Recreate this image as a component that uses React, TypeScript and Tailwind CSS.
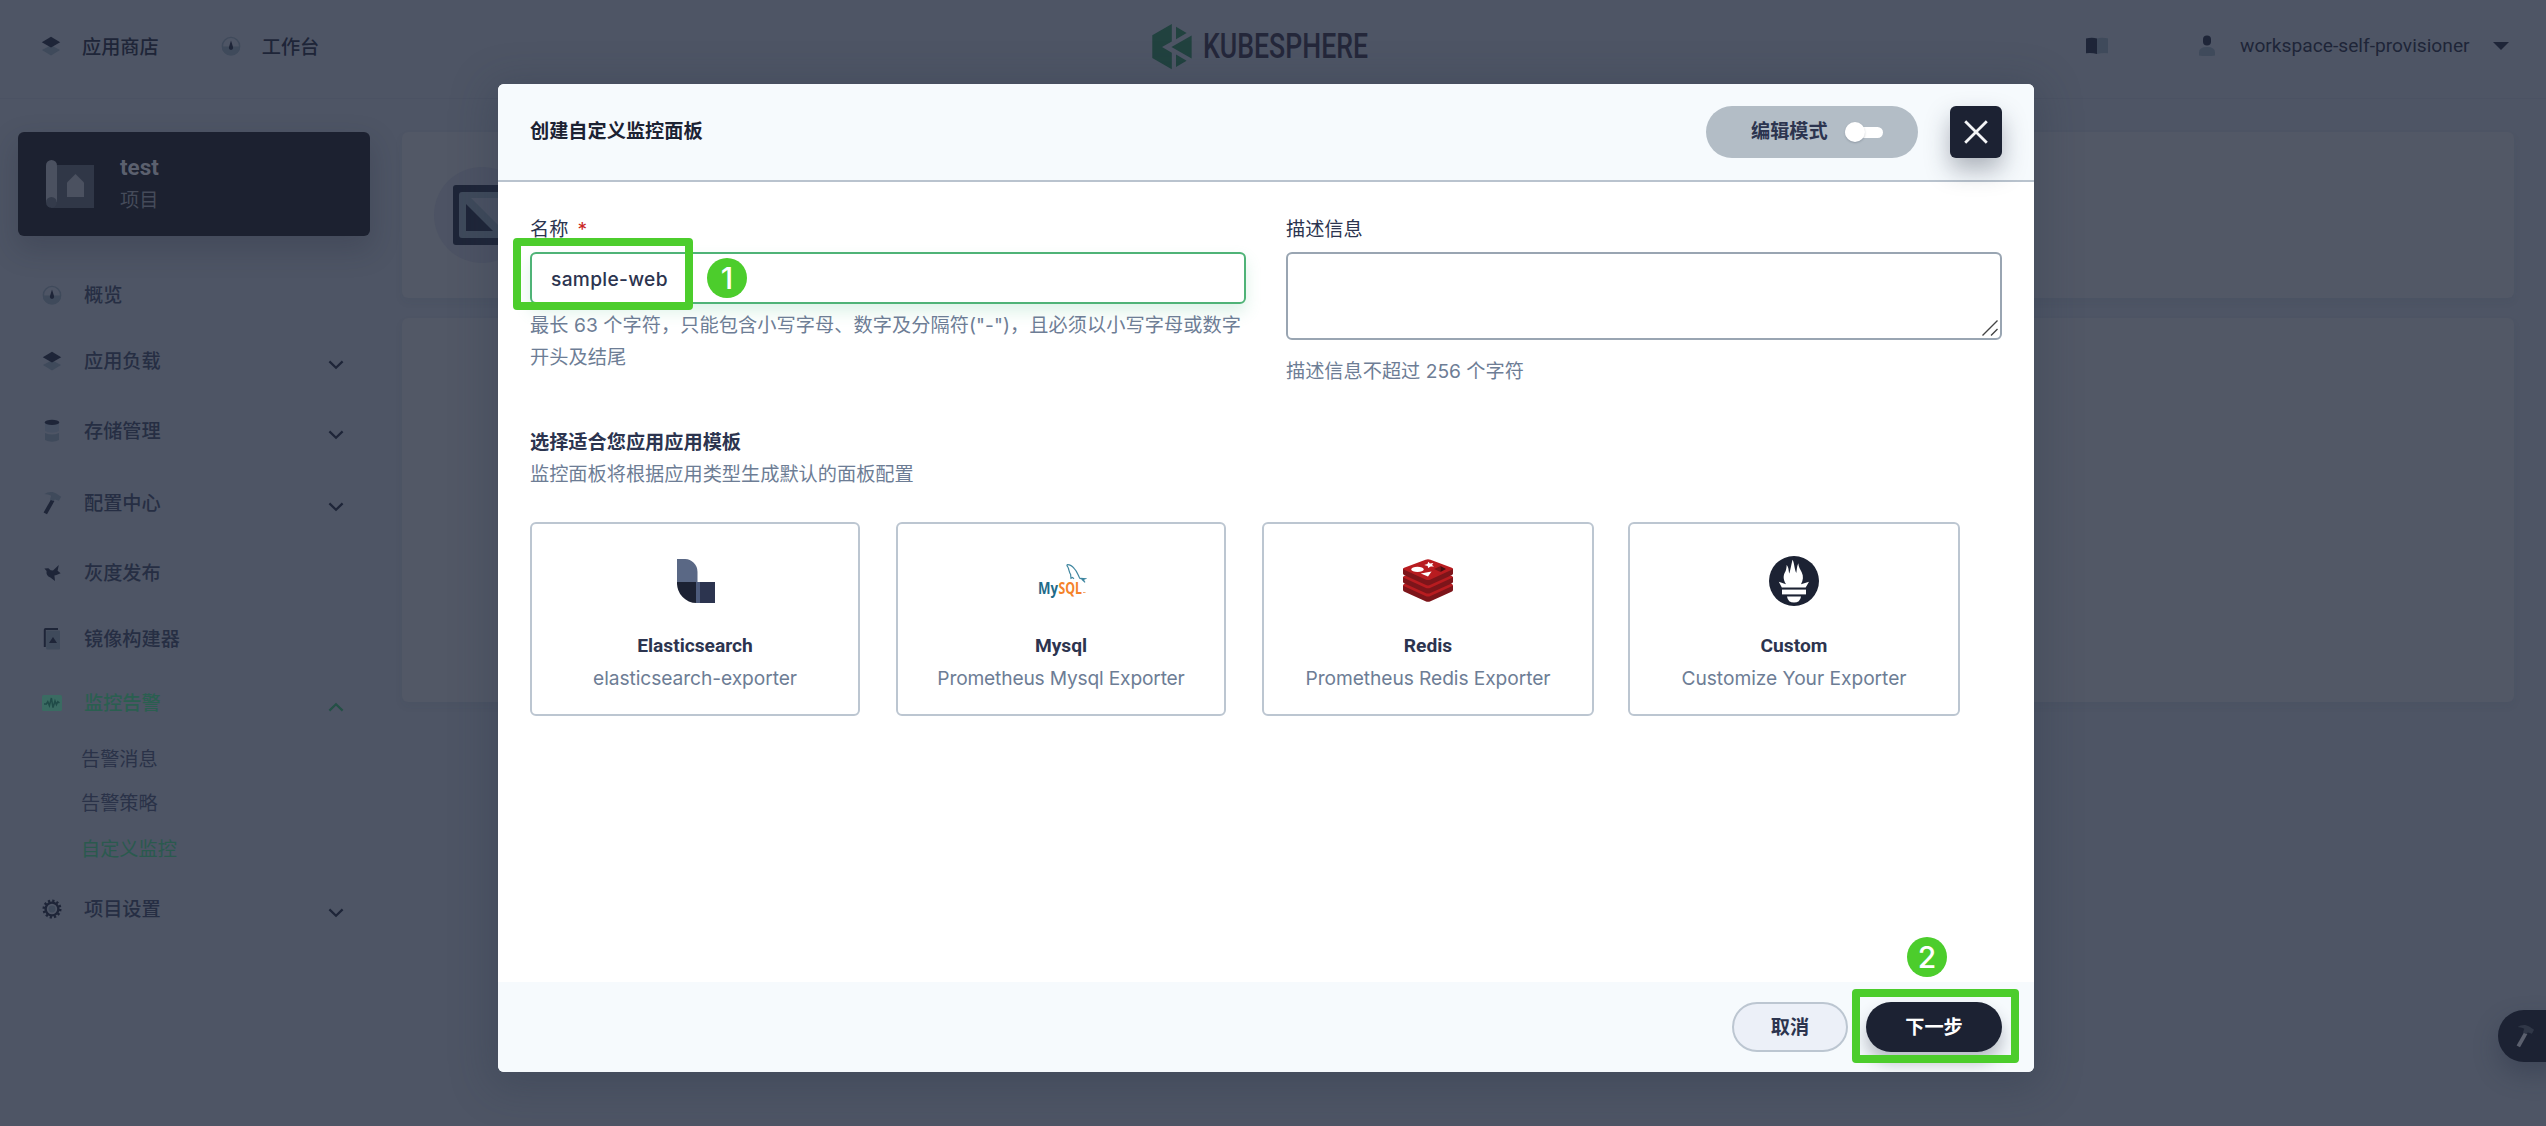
import type { ReactNode } from 'react';

type IconProps = { className?: string };

const LayersIcon = ({ className = '' }: IconProps) => (
  <svg className={className} width="20" height="20" viewBox="0 0 20 20">
    <path d="M10 9.2 19 14 10 19.4 1 14z" fill="#3f4a5b" />
    <path d="M10 .8 19.2 6.2 10 11.6 .8 6.2z" fill="#1e2538" />
  </svg>
);

const DashboardIcon = ({ className = '' }: IconProps) => (
  <svg className={className} width="20" height="20" viewBox="0 0 20 20">
    <circle cx="10" cy="10" r="8.6" fill="none" stroke="#3f4a5b" strokeWidth="1.4" />
    <path d="M.8 10.4h18.4a9.2 9.2 0 0 1-18.4 0z" fill="#3f4a5b" />
    <path d="M10 4.6 12 11a2.1 2.1 0 1 1-4 0z" fill="#1e2538" />
  </svg>
);

const StorageIcon = () => (
  <svg width="20" height="24" viewBox="0 0 20 24">
    <path d="M3 4h14v8q-7 3-14 0z" fill="#465062" />
    <path d="M3 14q7 3 14 0v7q-7 3.6-14 0z" fill="#3f4a5b" />
    <ellipse cx="10" cy="3.4" rx="7.2" ry="2.6" fill="#1e2538" />
  </svg>
);

const HammerIcon = ({ handle, head }: { handle: string; head: string }) => (
  <svg width="20" height="24" viewBox="0 0 20 24">
    <path d="M9 8.5l3.4 1.6L5 23.2 1.6 21.4z" fill={handle} />
    <path d="M2.6 2.9C6 .4 11.3.2 14.2 2.6l4.9 3.2-2.2 4-3.8-1.4-2.6 1.4L8 8.4l1.2-3.6C7 3.2 4.6 3.4 2.6 2.9z" fill={head} />
  </svg>
);

const BirdIcon = () => (
  <svg width="20" height="20" viewBox="0 0 20 20">
    <path d="M2.4 5.6 6.4 5.2 8.6 7.2 11 7.4 16.8 2 15.6 7.8 18.6 10.2 14.4 12 12.4 12.6 13 18 8.4 14.6C5.4 13.6 4 11 4.6 8z" fill="#1e2538" />
  </svg>
);

const ImageBuilderIcon = () => (
  <svg width="20" height="24" viewBox="0 0 20 24">
    <path d="M2.8 20V2.8q0-.8.8-.8H16" fill="none" stroke="#1e2538" strokeWidth="2" />
    <rect x="4.2" y="3.4" width="13.8" height="19.2" rx="1" fill="#3f4a5b" />
    <path d="M11 10l4 6H7z" fill="#1e2538" />
  </svg>
);

const MonitorIcon = () => (
  <svg width="20" height="16" viewBox="0 0 20 16">
    <rect width="20" height="16" rx="1.5" fill="#3a6b62" />
    <path d="M2 9h2.4l1.4-2.4 1.6 4L9.4 3 11 12.6 13 6l1.4 3.6 1.4-3L17.4 8" fill="none" stroke="#204b48" strokeWidth="1.5" />
  </svg>
);

const GearIcon = () => (
  <svg width="20" height="20" viewBox="0 0 20 20">
    <circle cx="10" cy="10" r="8.2" fill="none" stroke="#1e2538" strokeWidth="2.6" strokeDasharray="2.2 2.093" />
    <circle cx="10" cy="10" r="6.4" fill="none" stroke="#1e2538" strokeWidth="2.4" />
    <circle cx="10" cy="10" r="3.4" fill="#3f4a5b" />
  </svg>
);

const Chevron = ({ up }: { up?: boolean }) => (
  <svg width="16" height="10" viewBox="0 0 16 10" fill="none" strokeWidth="2.2">
    {up ? <path d="M1.4 8.6 8 2.2l6.6 6.4" stroke="#245046" /> : <path d="M1.4 1.4 8 7.8l6.6-6.4" stroke="#1e2538" />}
  </svg>
);

const ProjectIcon = () => (
  <svg width="48" height="48" viewBox="0 0 48 48">
    <path d="M11 5h37v43H5V38h6z" fill="#303747" />
    <path d="M0 5.5a5.5 5.5 0 0 1 11 0V42H0z" fill="#4b5160" />
    <circle cx="5.4" cy="42.4" r="5.4" fill="#343b4b" />
    <path d="M29.500 14l8.500 8.500V37H21V22.500z" fill="#4b5160" />
  </svg>
);

const Logo = () => (
  <svg className="overflow-visible" width="240" height="56" viewBox="0 0 240 56">
    <g fill="#21423f">
      <path d="M19.800 2v17.400L10 25l9.800 5.800V47.200L.3 36V13.200z" />
      <path d="M24 4.800 34.600 11 24 17.200z" />
      <path d="M39.600 13.600v22.800L19.500 25z" />
      <path d="M24 32.600 34.600 38.800 24 45z" />
    </g>
    <text x="51" y="36.300" fontSize="34.200" textLength="165" lengthAdjust="spacingAndGlyphs" fill="#24273a" className="font-['Roboto',sans-serif] font-medium">
      KUBESPHERE
    </text>
  </svg>
);

const ElasticIcon = () => (
  <svg className="ml-[2px]" width="38" height="44" viewBox="0 0 38 44">
    <path d="M0 0h7a13 13 0 0 1 13.500 13.500V23H0z" fill="#5a6885" />
    <path d="M0 23h19.500v21A19.500 20 0 0 1 0 23z" fill="#1c2233" />
    <path d="M19 23h19v21H19z" fill="#2c344f" />
    <path d="M19 23h4v21h-4z" fill="#4d5b7b" />
  </svg>
);

const MysqlIcon = () => (
  <svg className="ml-[2px] mt-[2px]" width="50" height="36" viewBox="0 0 50 36">
    <text x="1" y="29.500" fontSize="16" textLength="20" lengthAdjust="spacingAndGlyphs" fill="#1f6b8a" className="font-['Open_Sans',sans-serif] font-bold">My</text>
    <text x="21.500" y="29.500" fontSize="16" textLength="23.500" lengthAdjust="spacingAndGlyphs" fill="#f5822a" className="font-['Open_Sans',sans-serif] font-bold">SQL</text>
    <path d="M46 28.500h2.500" stroke="#f5a76a" strokeWidth="1" />
    <path d="M47.500 17.400c-1.500-3-4-2.200-5-3.600-1.400-2.600-2.400-6.600-5.400-9.400C35.400 2.200 33 .6 30.600.6c-1.600.4.200 2 .8 3.600.8 2.600 1 4.600 2.200 6.200l.4 3.800 1.400-.8 1.600 1.400M43.500 14.400l4.600.4-2.600 1.200 2.600 2.400" fill="none" stroke="#3f86a0" strokeWidth="1.200" />
  </svg>
);

const redisLayers = [16.4, 8.2, 0];

const RedisIcon = () => (
  <svg width="50" height="44" viewBox="0 0 50 44">
    {redisLayers.map((y) => (
      <g key={y} transform={`translate(0 ${y})`}>
        <path d="M0 9.800h50v4.800q0 1-1.500 1.700L27.500 25.800q-2.500 1.200-5 0L1.500 16.300Q0 15.600 0 14.600z" fill="#7d151a" />
        <path d="M1.200 8.700 22.500.700q2.500-1 5 0l21.300 8q2.200 1 0 2.100L27.500 20.500q-2.500 1.200-5 0L1.200 10.800q-2.200-1.100 0-2.100z" fill="#b81c20" />
      </g>
    ))}
    <ellipse cx="14.500" cy="10.400" rx="6.200" ry="2.700" fill="#fff" />
    <path d="M25.400 2.800l1.500 1.700 3.400-.4-1.300 1.900 2 1.600-3.300-.2-2.600 1.700-.4-2.200-3.500-.9 3.200-.9z" fill="#fff" />
    <path d="M17.800 14.400 28.600 12.600 25 17.600z" fill="#fff" />
    <path d="M31 10l6.500-3v6z" fill="#7d151a" />
    <path d="M37.500 7l5.500 3-5.500 3z" fill="#450e11" />
  </svg>
);

const PrometheusIcon = () => (
  <svg width="50" height="50" viewBox="0 0 50 50">
    <circle cx="25" cy="25" r="25" fill="#1c2233" />
    <g fill="#fff">
      <path d="M12.800 31.500 9.800 25.800 17 28.200C13.500 23 14.500 18.500 16.400 15.600c.7-1.800 1.300-4 1.200-6.600 2.600 3 1.800 6 2.700 8.400 1-3 1.900-8 3.200-13.600 2 3.200 1.600 8.400 3.800 13.200.6-3.200.4-6.600 2-9.800.2 3.600 1.800 6 3.400 9 2 4 1.500 8.200-.7 12l8-2.400-3.300 5.700z" />
      <path d="M13 33.600h24v4.800H13z" />
      <path d="M18 40.400h14q-1 6.200-7 6.200t-7-6.200z" />
    </g>
  </svg>
);

type MenuEntry = {
  label: string;
  icon: ReactNode;
  gap: string;
  expand?: 'down' | 'up';
  active?: boolean;
};

const menu: MenuEntry[] = [
  { label: '概览', icon: <DashboardIcon />, gap: 'mt-[39px]' },
  { label: '应用负载', icon: <LayersIcon />, gap: 'mt-[26px]', expand: 'down' },
  { label: '存储管理', icon: <StorageIcon />, gap: 'mt-[30px]', expand: 'down' },
  { label: '配置中心', icon: <HammerIcon handle="#1e2538" head="#3f4a5b" />, gap: 'mt-[32px]', expand: 'down' },
  { label: '灰度发布', icon: <BirdIcon />, gap: 'mt-[30px]' },
  { label: '镜像构建器', icon: <ImageBuilderIcon />, gap: 'mt-[26px]' },
  { label: '监控告警', icon: <MonitorIcon />, gap: 'mt-[24px]', expand: 'up', active: true },
];

const submenu = [
  { label: '告警消息', style: 'mt-[16px] text-[#2a3248]' },
  { label: '告警策略', style: 'mt-[4px] text-[#2a3248]' },
  { label: '自定义监控', style: 'mt-[6px] text-[#2a5a4e]' },
];

const templates = [
  { title: 'Elasticsearch', text: 'elasticsearch-exporter', icon: <ElasticIcon />, box: 'w-[330px]', spacing: 'tracking-[-0.070px]' },
  { title: 'Mysql', text: 'Prometheus Mysql Exporter', icon: <MysqlIcon />, box: 'ml-9 w-[330px]', spacing: 'tracking-[-0.180px]' },
  { title: 'Redis', text: 'Prometheus Redis Exporter', icon: <RedisIcon />, box: 'ml-9 w-[332px]', spacing: 'tracking-[-0.080px]' },
  { title: 'Custom', text: 'Customize Your Exporter', icon: <PrometheusIcon />, box: 'ml-[34px] w-[332px]', spacing: 'tracking-[-0.030px]' },
];

function MenuItem({ label, icon, gap, expand, active }: MenuEntry) {
  return (
    <li className={`flex h-10 items-center ${gap}`}>
      <span className="ml-6 flex w-[20px] shrink-0 justify-center">{icon}</span>
      <span className={`-mt-[1px] ml-[22px] flex-1 font-medium ${active ? 'text-[#2a5f50]' : 'text-[#262e43]'}`}>{label}</span>
      {expand && (
        <span className="mr-[26px] mt-[7px]">
          <Chevron up={expand === 'up'} />
        </span>
      )}
    </li>
  );
}

function Background() {
  return (
    <div className="flex h-full w-full flex-col bg-[#4e5565]">
      <header className="flex h-[99px] shrink-0 border-b border-[#4b5263] text-[#1e2538]">
        <nav className="flex h-[94px] w-[1152px] items-center font-medium">
          <LayersIcon className="-mt-[2px] ml-[41px]" />
          <span className="ml-[21px]">应用商店</span>
          <DashboardIcon className="-mt-[2px] ml-[62px]" />
          <span className="ml-[21px]">工作台</span>
        </nav>
        <div className="mt-[22px] w-[240px]">
          <Logo />
        </div>
        <div className="flex h-[91px] flex-1 items-center justify-end pr-[37px]">
          <svg width="24" height="18" viewBox="0 0 24 18">
            <path d="M1 1.500q6-1.500 11 0V17q-5-1.500-11-.8z" fill="#1e2538" />
            <path d="M12 1.500q5-1.500 11 0v14.700q-6-.7-11 .8z" fill="#3f4a5b" />
          </svg>
          <svg className="ml-[89px]" width="18" height="22" viewBox="0 0 18 22">
            <rect x="5" y=".5" width="8" height="10" rx="4" fill="#1e2538" />
            <path d="M1 20.500v-3q0-5.500 8-5.500t8 5.500v3q-8 1-16 0z" fill="#3f4a5b" />
          </svg>
          <span className="ml-[24px] w-[229px] whitespace-nowrap font-['Roboto',sans-serif] text-[19.200px]">workspace-self-provisioner</span>
          <svg className="ml-[24px]" width="16" height="8" viewBox="0 0 16 8">
            <path d="M0 0h16L8 8z" fill="#1e2538" />
          </svg>
        </div>
      </header>
      <div className="flex min-h-0 flex-1 pt-[33px]">
        <aside className="ml-[18px] w-[352px]">
          <div className="flex h-[104px] items-center rounded-md bg-[#1c2130] pl-7 shadow-[0_12px_28px_2px_rgba(30,37,56,0.22)]">
            <ProjectIcon />
            <div className="-mt-[2px] ml-[26px] flex flex-col">
              <span className="font-['Roboto',sans-serif] text-[22.400px] font-bold leading-[32px] text-[#5b606e]">test</span>
              <span className="mt-[1px] leading-[32px] text-[#454b5a]">项目</span>
            </div>
          </div>
          <ul>
            {menu.map((entry) => (
              <MenuItem key={entry.label} {...entry} />
            ))}
            {submenu.map((entry) => (
              <li key={entry.label} className={`flex h-10 items-center pl-[63px] ${entry.style}`}>
                {entry.label}
              </li>
            ))}
            <MenuItem label="项目设置" icon={<GearIcon />} gap="mt-[20px]" expand="down" />
          </ul>
        </aside>
        <main className="ml-8 flex w-[2112px] flex-col gap-5">
          <section className="flex h-[166px] items-center rounded-md bg-[#525866] pl-8 shadow-[0_4px_8px_rgba(36,46,66,0.06)]">
            <div className="flex size-24 items-center justify-center rounded-full bg-[#4d5364]">
              <svg width="60" height="60" viewBox="0 0 60 60">
                <rect x="1" y="0" width="58" height="60" rx="3" fill="#1e2538" />
                <rect x="7" y="7" width="46" height="46" rx="3" fill="#3f4a5b" />
                <path d="M14 19v27h27z" fill="#1e2538" />
                <path d="M19 13h28v28z" fill="#4b5263" />
              </svg>
            </div>
          </section>
          <section className="h-[384px] rounded-md bg-[#525866] shadow-[0_4px_8px_rgba(36,46,66,0.06)]" />
        </main>
      </div>
    </div>
  );
}

function Marker({ value, place }: { value: string; place: string }) {
  return (
    <span className={`absolute flex size-10 items-center justify-center rounded-full bg-[#4ccd2c] font-['Inter',sans-serif] text-[30px] font-medium leading-none text-white ${place}`}>
      {value}
    </span>
  );
}

function Dialog() {
  return (
    <div className="absolute left-[498px] top-[84px] flex h-[988px] w-[1536px] flex-col overflow-hidden rounded-md bg-white shadow-[0_8px_40px_8px_rgba(36,46,66,0.25)]">
      <header className="flex h-[98px] shrink-0 items-center border-b-2 border-[#b9c3ce] bg-[#f6fafd] pl-8 pr-8">
        <h1 className="-mt-[2px] flex-1 font-bold text-[#1c2233]">创建自定义监控面板</h1>
        <button className="flex h-[52px] w-[212px] items-center rounded-full bg-[#b3bdc6] pl-[45px] font-bold text-[#2c344f]">
          <span className="-mt-[2px]">编辑模式</span>
          <span className="relative ml-[17px] block h-[11px] w-[38px] rounded-full bg-white">
            <span className="absolute -top-[5px] left-0 size-5 rounded-full bg-white shadow-[0_1px_2px_rgba(36,46,66,0.25)]" />
          </span>
        </button>
        <button className="ml-8 flex size-[52px] items-center justify-center rounded-md bg-[#1c2233] shadow-[0_12px_24px_rgba(36,46,66,0.35)]">
          <svg width="24" height="24" viewBox="0 0 24 24">
            <path d="M1.200 1.200 22.800 22.800M22.800 1.200 1.200 22.800" stroke="#f4f5f7" strokeWidth="2.800" />
          </svg>
        </button>
      </header>

      <div className="flex min-h-0 flex-1 flex-col pl-8 pr-8 pt-[31px]">
        <div className="flex gap-10">
          <div className="w-[716px]">
            <label className="flex h-8 items-center text-[#2c344f]">
              名称<span className="ml-[9px] text-[#ca2621]">*</span>
            </label>
            <div className="mt-[7px] flex h-[52px] items-center rounded-md border-2 border-[#4fb377] pl-[19px] font-['Inter','Noto_Sans_CJK_SC',sans-serif] font-medium text-[#2c344f] shadow-[0_8px_16px_rgba(85,188,138,0.2)]">
              <span className="mt-[1px] tracking-[0.300px]">sample-web</span>
            </div>
            <p className="mt-[5px] w-[716px] whitespace-nowrap leading-8 tracking-[0.060px] text-[#6d7d95]">
              最长 63 个字符，只能包含小写字母、数字及分隔符("-")，且必须以小写字母或数字
              <br />
              开头及结尾
            </p>
          </div>
          <div className="w-[716px]">
            <label className="flex h-8 items-center text-[#2c344f]">描述信息</label>
            <div className="mt-[7px] flex h-[88px] items-end justify-end rounded-md border-2 border-[#99a5b2] p-[2px]">
              <svg width="16" height="16" viewBox="0 0 16 16">
                <path d="M.500 15.500 15.500.500M9 15.500 15.500 9" stroke="#444" strokeWidth="1.400" />
              </svg>
            </div>
            <p className="mt-[15px] leading-8 text-[#6d7d95]">描述信息不超过 256 个字符</p>
          </div>
        </div>

        <h2 className="mt-[39px] h-8 font-bold leading-8 text-[#2c344f]">选择适合您应用应用模板</h2>
        <p className="h-8 leading-8 text-[#6d7d95]">监控面板将根据应用类型生成默认的面板配置</p>

        <div className="mt-[32px] flex">
          {templates.map((item) => (
            <article key={item.title} className={`flex h-[194px] flex-col items-center rounded-md border-2 border-[#bcc6d1] ${item.box}`}>
              <div className="mt-[24px] flex h-[66px] items-center">{item.icon}</div>
              <h3 className="mt-[16px] font-['Roboto',sans-serif] text-[19.200px] font-bold leading-8 text-[#2c344f]">{item.title}</h3>
              <p className={`font-['Inter',sans-serif] leading-8 text-[#6d7d95] ${item.spacing}`}>{item.text}</p>
            </article>
          ))}
        </div>
      </div>

      <footer className="flex h-[90px] shrink-0 items-center justify-end gap-[18px] bg-[#f6fafd] pr-8 font-bold">
        <button className="h-[50px] w-[116px] rounded-full border-2 border-[#bcc6d1] bg-[#ecf0f8] text-[#2c344f]">取消</button>
        <button className="h-[50px] w-[136px] rounded-full bg-[#1c2233] text-white shadow-[0_10px_16px_rgba(36,46,66,0.3)]">下一步</button>
      </footer>
    </div>
  );
}

export default function App() {
  return (
    <div className="relative h-[1126px] w-[2546px] overflow-hidden font-['Inter','Noto_Sans_CJK_SC',sans-serif] text-[19.200px] leading-8">
      <Background />
      <div className="absolute -right-[26px] top-[1010px] flex h-[52px] w-[74px] items-center rounded-full bg-[#1c2233] pl-[17px] shadow-[0_12px_24px_rgba(36,46,66,0.35)]">
        <HammerIcon handle="#5b606e" head="#303747" />
      </div>
      <Dialog />
      <div className="absolute left-[513px] top-[238px] h-[72px] w-[180px] rounded-[4px] border-8 border-[#4ccd2c]" />
      <Marker value="1" place="left-[707px] top-[258px]" />
      <div className="absolute left-[1852px] top-[989px] h-[74px] w-[167px] rounded-[4px] border-8 border-[#4ccd2c]" />
      <Marker value="2" place="left-[1907px] top-[937px]" />
    </div>
  );
}
